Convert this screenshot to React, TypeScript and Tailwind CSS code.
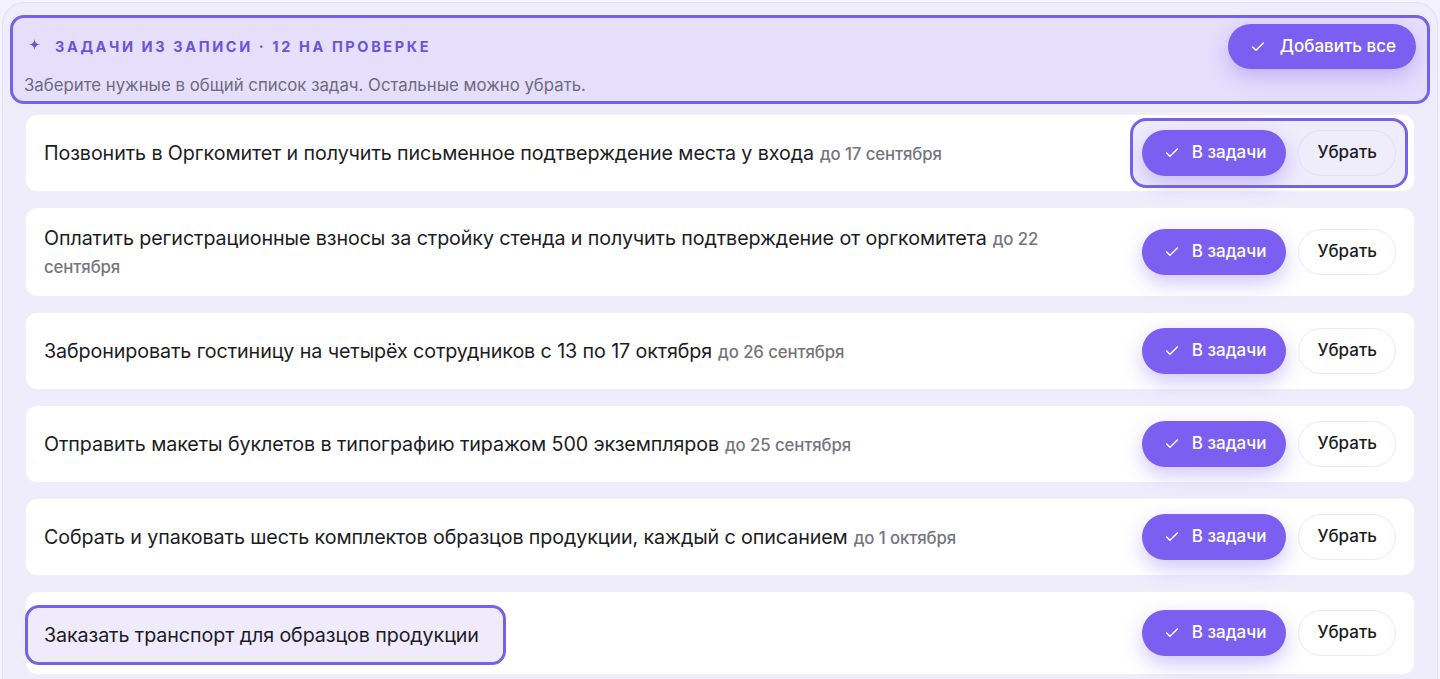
import { Check } from "lucide-react";

type Task = {
  title: string;
  due?: string;
};

const tasks: Task[] = [
  {
    title:
      "Позвонить в Оргкомитет и получить письменное подтверждение места у входа",
    due: "до 17 сентября",
  },
  {
    title:
      "Оплатить регистрационные взносы за стройку стенда и получить подтверждение от оргкомитета",
    due: "до 22 сентября",
  },
  {
    title: "Забронировать гостиницу на четырёх сотрудников с 13 по 17 октября",
    due: "до 26 сентября",
  },
  {
    title: "Отправить макеты буклетов в типографию тиражом 500 экземпляров",
    due: "до 25 сентября",
  },
  {
    title:
      "Собрать и упаковать шесть комплектов образцов продукции, каждый с описанием",
    due: "до 1 октября",
  },
  { title: "Заказать транспорт для образцов продукции" },
];

function Sparkle() {
  return (
    <svg viewBox="0 0 12 12" className="w-[11px] h-[11px] text-[#6a54d8]">
      <path
        d="M6 0C6.4 3.8 8.2 5.6 12 6C8.2 6.4 6.4 8.2 6 12C5.6 8.2 3.8 6.4 0 6C3.8 5.6 5.6 3.8 6 0Z"
        fill="currentColor"
      />
    </svg>
  );
}

function TaskRow({ task, index }: { task: Task; index: number }) {
  const highlightActions = index === 0;
  const highlightText = index === tasks.length - 1;

  const text = (
    <p className="py-[1px] text-[19.7px] leading-[28px] text-[#1d1c24] tracking-[-0.1px]">
      {task.title}
      {task.due && (
        <span className="ml-[6px] text-[16.8px] leading-[1] font-medium text-[#76747e]">
          {task.due}
        </span>
      )}
    </p>
  );

  const actions = (
    <>
      <button className="flex items-center gap-[12px] h-[46px] pl-[22px] pr-[20px] rounded-full bg-[#7a5ff0] text-white text-[17px] font-medium shadow-[0_8px_20px_rgba(122,95,240,0.35)]">
        <Check className="w-[16px] h-[16px]" strokeWidth={2.2} />
        В задачи
      </button>
      <button
        className={`h-[46px] px-[18px] rounded-full border text-[17px] font-medium text-[#1d1c24] ${
          highlightActions
            ? "bg-[#efecfc] border-[#e3dff4]"
            : "bg-white border-[#ebe9f1]"
        }`}
      >
        Убрать
      </button>
    </>
  );

  return (
    <div className="flex items-center justify-between gap-10 bg-white rounded-[12px] border border-[#f0eef8] px-[18px] py-[15px] min-h-[78px]">
      {highlightText ? (
        <div className="-ml-[19px] -mt-[2px] -mb-[6px] pl-[16px] pr-[24px] py-[12px] rounded-[14px] border-[3px] border-[#7662e7] bg-[#efebfd]">
          {text}
        </div>
      ) : (
        text
      )}
      {highlightActions ? (
        <div className="-m-[12px] shrink-0 flex items-center gap-[12px] p-[9px] rounded-[16px] border-[3px] border-[#7662e7] bg-[#efecfc]">
          {actions}
        </div>
      ) : (
        <div className="shrink-0 flex items-center gap-[12px]">{actions}</div>
      )}
    </div>
  );
}

export default function App() {
  return (
    <div
      className="min-h-screen bg-[#f4f2fe] pt-[2px] px-[2px]"
      style={{ fontFamily: "Inter, 'Noto Sans', sans-serif" }}
    >
      <div className="min-h-[700px] rounded-t-[22px] border border-[#e3def8] bg-[#efedfc] px-[22px] pt-[12px]">
        {/* Header */}
        <div className="-mx-[15px] mb-[10px] rounded-[14px] border-[3px] border-[#7662e7] bg-[#e5dffc] pl-[11px] pr-[11px] pt-[6px] pb-[4px]">
          <div className="flex items-center justify-between">
            <div className="flex items-center gap-[15px] pl-[1px]">
              <span className="ml-[4px] -mt-[4px] flex">
                <Sparkle />
              </span>
              <span className="text-[14.5px] font-bold uppercase tracking-[0.18em] text-[#6a54d8]">
                Задачи из записи · 12 на проверке
              </span>
            </div>
            <button className="flex items-center gap-[14px] h-[45px] pl-[22px] pr-[20px] rounded-full bg-[#7a5ff0] text-white text-[17px] font-medium shadow-[0_8px_20px_rgba(122,95,240,0.35)]">
              <Check className="w-[16px] h-[16px]" strokeWidth={2.2} />
              Добавить все
            </button>
          </div>
          <p className="mt-[4px] text-[16.8px] leading-[24px] text-[#6d6a80]">
            Заберите нужные в общий список задач. Остальные можно убрать.
          </p>
        </div>

        {/* Tasks */}
        <div className="flex flex-col gap-[15px]">
          {tasks.map((task, i) => (
            <TaskRow key={i} task={task} index={i} />
          ))}
        </div>
      </div>
    </div>
  );
}
